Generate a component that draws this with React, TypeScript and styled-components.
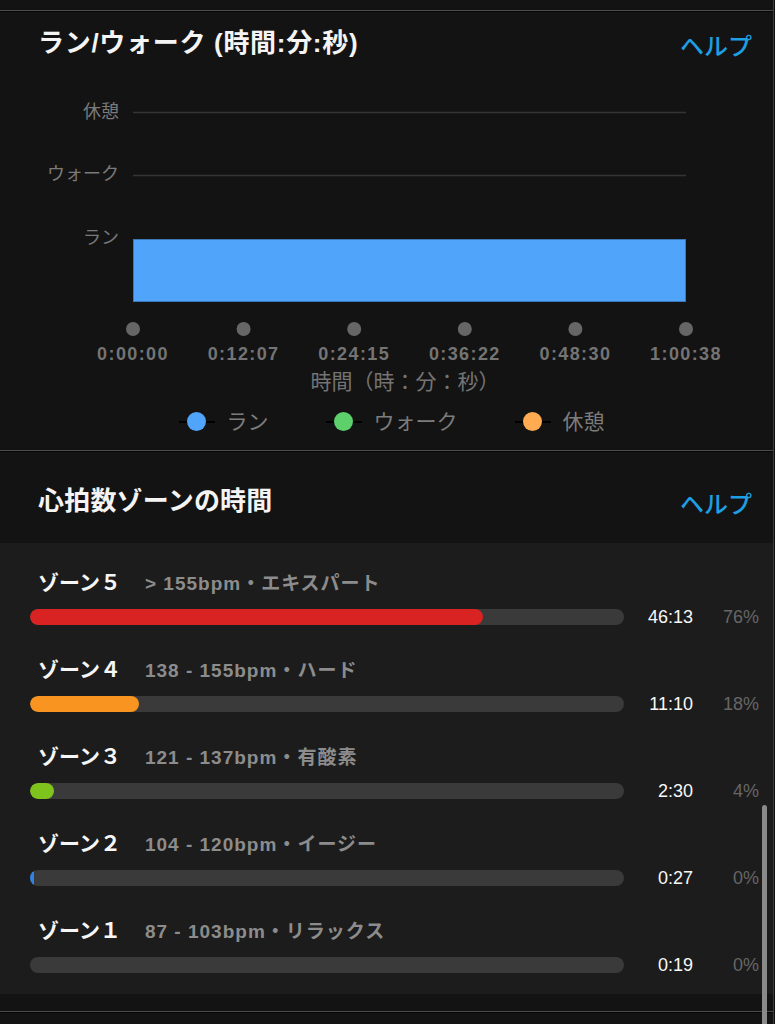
import styled, { createGlobalStyle } from "styled-components";

const GlobalStyle = createGlobalStyle`
  html, body {
    margin: 0;
    padding: 0;
    background: #0e0e0e;
  }
  body {
    font-family: "Liberation Sans", "Noto Sans CJK JP", sans-serif;
    -webkit-font-smoothing: antialiased;
  }
`;

const Page = styled.div`
  position: relative;
  width: 774px;
  height: 1024px;
  overflow: hidden;
  background: #131313;
  border-right: 1px solid #3a3a3a;
  padding-top: 10px;
  box-sizing: border-box;
`;

const Divider = styled.div`
  height: 1px;
  background: #4c4c4c;
  border-bottom: 1px solid #050505;
`;

const Card = styled.section`
  background: #131313;
`;

const Header = styled.div<{ $top: number; $height: number }>`
  display: flex;
  justify-content: space-between;
  align-items: flex-start;
  height: ${(p) => p.$height}px;
  padding: ${(p) => p.$top}px 21px 0 38px;
  box-sizing: border-box;
`;

const Title = styled.h2<{ $spacing?: number }>`
  margin: 0;
  font-size: 26px;
  line-height: 32px;
  font-weight: 700;
  letter-spacing: ${(p) => p.$spacing ?? 0}px;
  color: #f4f4f4;
`;

const HelpLink = styled.a`
  font-size: 24px;
  line-height: 32px;
  font-weight: 500;
  color: #1d9fe4;
  margin-top: 4px;
  cursor: pointer;
`;

const ChartSvg = styled.svg`
  display: block;
  font-family: "Liberation Sans", "Noto Sans CJK JP", sans-serif;
`;

const Legend = styled.div`
  display: flex;
  justify-content: center;
  gap: 57px;
  margin-top: 6px;
  padding: 0 0 13px 10px;
  height: 30px;
`;

const LegendItem = styled.div`
  display: flex;
  align-items: center;
  gap: 12px;
  font-size: 21px;
  line-height: 30px;
  color: #7c7c7c;
`;

const Marker = styled.span<{ $color: string }>`
  position: relative;
  display: inline-block;
  width: 36px;
  height: 2px;
  background: #000;

  &::after {
    content: "";
    position: absolute;
    left: 8px;
    top: -9px;
    width: 19px;
    height: 19px;
    border-radius: 50%;
    background: ${(p) => p.$color};
  }
`;

const ZoneList = styled.div`
  background: #1c1c1c;
  padding: 24px 0 17px;
  display: flex;
  flex-direction: column;
  gap: 25px;
`;

const ZoneRow = styled.div`
  display: flex;
  flex-direction: column;
  gap: 10px;
`;

const ZoneHeading = styled.div`
  display: flex;
  align-items: center;
  gap: 24px;
  height: 28px;
  padding-left: 38px;
`;

const ZoneName = styled.span`
  font-size: 21px;
  font-weight: 700;
  color: #f6f6f6;
`;

const ZoneRange = styled.span`
  font-size: 19px;
  font-weight: 700;
  letter-spacing: 1px;
  color: #8c8c8c;
`;

const BarLine = styled.div`
  display: flex;
  align-items: center;
  height: 24px;
  padding-left: 30px;
`;

const Track = styled.div`
  width: 594px;
  height: 16px;
  border-radius: 8px;
  background: #3a3a3a;
  overflow: hidden;
`;

const Fill = styled.div<{ $color: string }>`
  height: 100%;
  border-radius: 8px;
  background: ${(p) => p.$color};
`;

const TimeValue = styled.span`
  width: 69px;
  text-align: right;
  font-size: 18px;
  color: #f8f8f8;
`;

const PctValue = styled.span`
  width: 66px;
  text-align: right;
  font-size: 18px;
  color: #666;
`;

const Footer = styled.div`
  height: 17px;
  background: #131313;
`;

const ScrollThumb = styled.div`
  position: absolute;
  left: 762px;
  top: 805px;
  width: 5px;
  height: 240px;
  border-radius: 3px;
  background: #8a8a8a;
`;

const ticks = ["0:00:00", "0:12:07", "0:24:15", "0:36:22", "0:48:30", "1:00:38"];

const zones = [
  { n: 5, range: "> 155bpm", label: "エキスパート", time: "46:13", color: "#d92222" },
  { n: 4, range: "138 - 155bpm", label: "ハード", time: "11:10", color: "#f8941f" },
  { n: 3, range: "121 - 137bpm", label: "有酸素", time: "2:30", color: "#7fc41d" },
  { n: 2, range: "104 - 120bpm", label: "イージー", time: "0:27", color: "#2f82ea" },
  { n: 1, range: "87 - 103bpm", label: "リラックス", time: "0:19", color: "transparent" },
];

const toSec = (t: string) => {
  const [m, s] = t.split(":").map(Number);
  return m * 60 + s;
};

const total = zones.reduce((a, z) => a + toSec(z.time), 0);

// full-width digit, as in the app ("ゾーン５")
const wide = (n: number) => String.fromCharCode(0xff10 + n);

const RunWalkChart = () => {
  const x0 = 133;
  const x1 = 686;
  const step = (x1 - x0) / (ticks.length - 1);
  return (
    <ChartSvg width={774} height={340} viewBox="0 0 774 340">
      <g fontSize={18} fill="#7a7a7a" textAnchor="end" dominantBaseline="central">
        <text x={119} y={51}>休憩</text>
        <text x={119} y={113}>ウォーク</text>
        <text x={119} y={177}>ラン</text>
      </g>
      <line x1={x0} x2={x1} y1={51.5} y2={51.5} stroke="#343434" strokeWidth={1.5} />
      <line x1={x0} x2={x1} y1={114.5} y2={114.5} stroke="#343434" strokeWidth={1.5} />
      <rect x={x0 + 0.5} y={178.5} width={x1 - x0 - 1} height={62} fill="#50a5fa" stroke="#3a78b8" />
      {ticks.map((t, i) => (
        <g key={t}>
          <circle cx={x0 + step * i} cy={268} r={7} fill="#666" />
          <text
            x={x0 + step * i}
            y={293}
            fontSize={18}
            fontWeight={700}
            letterSpacing={1.4}
            fill="#747474"
            textAnchor="middle"
            dominantBaseline="central"
          >
            {t}
          </text>
        </g>
      ))}
      <text x={405} y={320} fontSize={21} fill="#747474" textAnchor="middle" dominantBaseline="central">
        時間（時：分：秒）
      </text>
    </ChartSvg>
  );
};

export default function App() {
  return (
    <>
      <GlobalStyle />
      <Page>
        <Divider />
        <Card>
          <Header $top={15} $height={49}>
            <Title $spacing={0.7}>ラン/ウォーク (時間:分:秒)</Title>
            <HelpLink>ヘルプ</HelpLink>
          </Header>
          <RunWalkChart />
          <Legend>
            <LegendItem>
              <Marker $color="#50a5fa" />
              ラン
            </LegendItem>
            <LegendItem>
              <Marker $color="#5dd06c" />
              ウォーク
            </LegendItem>
            <LegendItem>
              <Marker $color="#ffab52" />
              休憩
            </LegendItem>
          </Legend>
        </Card>
        <Divider />
        <Card>
          <Header $top={33} $height={91}>
            <Title $spacing={0.2}>心拍数ゾーンの時間</Title>
            <HelpLink>ヘルプ</HelpLink>
          </Header>
          <ZoneList>
            {zones.map((z) => {
              const pct = (toSec(z.time) / total) * 100;
              return (
                <ZoneRow key={z.n}>
                  <ZoneHeading>
                    <ZoneName>ゾーン{wide(z.n)}</ZoneName>
                    <ZoneRange>
                      {z.range}・{z.label}
                    </ZoneRange>
                  </ZoneHeading>
                  <BarLine>
                    <Track>
                      <Fill $color={z.color} style={{ width: `${pct}%` }} />
                    </Track>
                    <TimeValue>{z.time}</TimeValue>
                    <PctValue>{Math.floor(pct)}%</PctValue>
                  </BarLine>
                </ZoneRow>
              );
            })}
          </ZoneList>
          <Footer />
        </Card>
        <Divider />
        <ScrollThumb />
      </Page>
    </>
  );
}
